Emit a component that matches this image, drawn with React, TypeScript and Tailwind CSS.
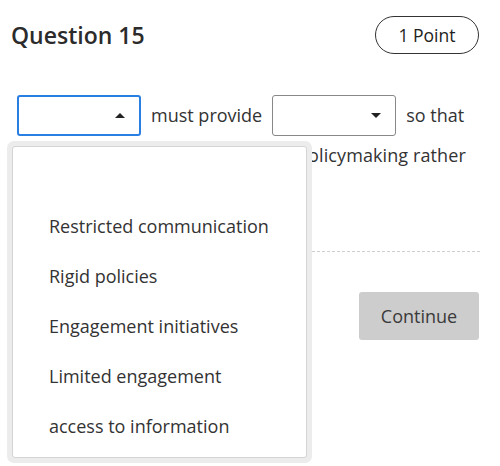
import React from 'react';

const options = [
    '',
    'Restricted communication',
    'Rigid policies',
    'Engagement initiatives',
    'Limited engagement',
    'access to information',
];

const Caret: React.FC<{ up?: boolean }> = ({ up }) => (
    <svg width="10" height="5" viewBox="0 0 10 5" className="text-[#222]">
        {up ? <path d="M0 5 L5 0 L10 5 Z" fill="currentColor" /> : <path d="M0 0 L10 0 L5 5 Z" fill="currentColor" />}
    </svg>
);

export default function App() {
    return (
        <div
            className="relative w-[500px] h-[466px] overflow-hidden bg-white text-[#333]"
            style={{ fontFamily: '"Open Sans", "Noto Sans", sans-serif' }}
        >
            <div className="flex items-center justify-between pt-4 pl-[11px] pr-[21px]">
                <h1 className="text-[23px] font-semibold leading-none text-[#2b2b2b]">Question 15</h1>
                <div className="h-[38px] w-[104px] flex items-center justify-center rounded-full border border-[#333] text-[17.5px] text-[#222]">
                    1 Point
                </div>
            </div>

            <div className="mt-[41px] pl-[17px] text-[18px] leading-[27px]">
                <div className="flex items-center gap-[10px]">
                    <div className="w-[124px] h-[41px] rounded-[3px] border-2 border-[#2a7fe3] flex items-center justify-end pr-[14px]">
                        <Caret up />
                    </div>
                    <span>must provide</span>
                    <div className="w-[124px] h-[41px] rounded-[3px] border border-[#888] flex items-center justify-end pr-[14px]">
                        <Caret />
                    </div>
                    <span>so that</span>
                </div>
                <div className="mt-[6px] pl-[280px] whitespace-nowrap tracking-[0.1px]">policymaking rather</div>
            </div>

            <div className="mt-[82px] ml-[17px] mr-[20px] border-t border-dashed border-[#cfcfcf]" />

            <div className="flex justify-end pr-[21px] mt-[40px]">
                <button className="w-[120px] h-[48px] rounded-[3px] bg-[#cdcdcd] text-[18px] text-[#3a3a3a]">
                    Continue
                </button>
            </div>

            <div className="absolute left-[7px] top-[141px] w-[305px] h-[322px] rounded-[7px] bg-[#ececec] p-[5px]">
                <div className="h-full rounded-[3px] border border-[#d4d4d4] bg-white pt-[4px]">
                    {options.map((o, i) => (
                        <div key={i} className="h-[50px] flex items-center pl-[36px] text-[18px]">
                            {o}
                        </div>
                    ))}
                </div>
            </div>
        </div>
    );
}
